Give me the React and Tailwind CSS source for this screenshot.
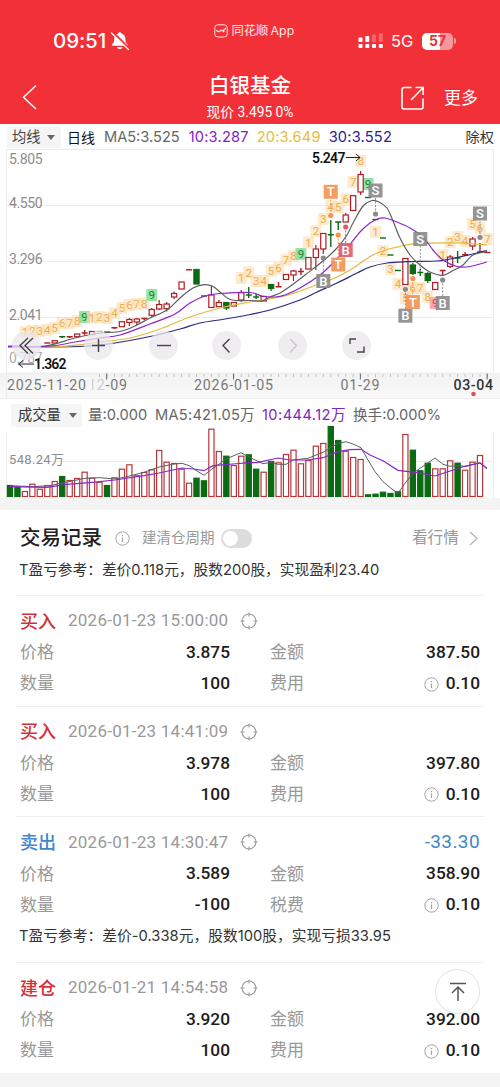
import React from "react";

const FONT = "font-['Inter','Noto_Sans_CJK_SC',sans-serif]";
const NUM = "font-['Roboto','Noto_Sans_CJK_SC',sans-serif]";

const RED = "#b01c24";
const GREEN = "#0b6b12";

const xAt = (i) => 10 + i * 7.46;

// [index, top, bottom, wickTop, wickBottom, color]
const candles = [
  [6, 340.7, 343, 340.7, 343, "r"],
  [9, 334, 336.7, 334, 336.7, "r"],
  [11, 331.5, 334.5, 331.5, 334.5, "r"],
  [15, 321.7, 326.7, 321.7, 326.7, "r"],
  [16, 319.5, 322.5, 318, 326, "r"],
  [17, 319, 322, 318, 325, "r"],
  [19, 309.5, 315.3, 308, 317, "r"],
  [20, 304.5, 309, 300, 310, "r"],
  [21, 304, 308.7, 302, 311.5, "r"],
  [22, 293.5, 297, 291.5, 299, "r"],
  [23, 282, 289, 282, 289, "r"],
  [25, 269.5, 284, 269.5, 284, "g"],
  [27, 295, 307.5, 285.5, 307.5, "r"],
  [28, 302.5, 306.7, 300, 306.7, "r"],
  [29, 302.5, 308, 302, 310, "g"],
  [30, 302.5, 306, 302.5, 306, "r"],
  [31, 292.7, 300, 290, 302, "r"],
  [34, 296.5, 301, 296.5, 301, "r"],
  [35, 284.5, 288.5, 284, 291, "g"],
  [37, 274.5, 279.5, 274.5, 279.5, "r"],
  [38, 271, 275, 270, 281, "r"],
  [40, 257.5, 269, 257.5, 269, "r"],
  [41, 249, 257.5, 245, 270, "r"],
  [42, 233.5, 249, 233.5, 254, "r"],
  [45, 215, 222, 213, 222, "r"],
  [46, 195.7, 210.5, 195.7, 210.5, "r"],
  [47, 174.5, 192, 171, 195, "r"],
  [53, 258.5, 284.5, 258.5, 284.5, "r"],
  [54, 265, 273.5, 263, 275, "g"],
  [56, 273.5, 280.5, 272, 283, "g"],
  [57, 282.5, 289.5, 282.5, 289.5, "r"],
  [59, 257, 266.5, 255, 268, "r"],
  [62, 239, 246, 237, 250, "r"],
];

// [index, y, wickTop, wickBottom, color]
const dashes = [
  [5, 343, 343, 343, RED],
  [7, 336.7, 336, 338, GREEN],
  [8, 336.7, 336, 338, RED],
  [10, 333, 330, 335.5, RED],
  [12, 331.5, 331.5, 331.5, "#888"],
  [13, 332, 332, 332, "#555"],
  [14, 327.7, 327, 329, RED],
  [18, 318.5, 318, 320, RED],
  [24, 269.8, 269.8, 269.8, RED],
  [26, 296, 296, 296, "#3c4a44"],
  [32, 295, 287, 298, GREEN],
  [33, 297, 294, 299, GREEN],
  [36, 286.8, 282, 287.5, RED],
  [39, 271.5, 268, 275, RED],
  [43, 234.8, 220, 247, GREEN],
  [44, 222, 222, 230, GREEN],
  [48, 197.5, 197.5, 197.5, GREEN],
  [49, 219.5, 219.5, 219.5, "#33405a"],
  [50, 238, 238, 238, GREEN],
  [51, 255, 255, 255, GREEN],
  [52, 270.5, 270.5, 270.5, GREEN],
  [55, 272.5, 269, 276, GREEN],
  [58, 270.5, 270.5, 275, RED],
  [60, 258, 251, 263, GREEN],
  [61, 254.7, 252, 256, RED],
  [63, 252, 243, 252, RED],
  [64, 252.5, 252.5, 252.5, RED],
];

// sequence counters: [start index, list of y]
const sequences = [
  [2, [332, 331, 331, 330, 328, 323, 323, 321, 317]],
  [11, [318, 317, 318, 313, 308, 305, 304, 303.5, 295]],
  [31, [278, 272.5, 281, 281, 270.5, 268, 260, 256, 254]],
  [40, [242.5, 231, 219, 206.5, 207, 199, 182, 161, 184]],
  [49, [232, 251, 269, 284, 298, 288, 288, 297, 303]],
  [58, [255, 242, 237, 241, 224, 228, 239]],
];

// trade marks: letter, index, label y, dot y, color
const marks = [
  ["T", 43, 191.8, 215.5, "#f4924e"],
  ["T", 44, 264.5, 235, "#f4924e"],
  ["B", 45, 250, 227, "#e05a66"],
  ["B", 42, 281, 258, "#8a8a8a"],
  ["S", 49, 190.5, 214, "#8a8a8a"],
  ["S", 55, 239, 272, "#8a8a8a"],
  ["B", 53, 315.7, 289.3, "#8a8a8a"],
  ["T", 54, 302, 278.5, "#f4924e"],
  ["B", 58, 303, 280, "#8a8a8a"],
  ["S", 63, 213.5, 237.3, "#8a8a8a"],
];

const ma5 = [[8, 346], [45, 346], [75, 338], [100, 333], [120, 331.5], [135, 326], [150, 318], [167, 310], [180, 298], [193, 288], [205, 284.7], [213, 286.5], [220, 292], [228, 298.5], [235, 300.5], [250, 300.5], [262, 301], [270, 297], [280, 293], [292, 285], [305, 275], [323, 261], [337, 248], [347, 235], [353, 223], [363, 206], [372, 200.5], [379, 202], [387, 208], [393, 221], [400, 238], [410, 255], [420, 265], [430, 272], [443, 275.3], [453, 270.5], [463, 265], [473, 255], [487, 251.5]];
const ma10 = [[8, 346.5], [50, 346], [75, 342], [100, 338], [120, 335], [150, 324], [175, 314], [190, 303], [205, 296], [220, 293.5], [250, 292.5], [262, 296], [275, 297], [285, 295], [300, 288], [320, 275], [333, 263], [347, 248], [360, 232], [370, 223], [378, 218.7], [385, 218], [397, 222], [410, 228], [423, 237], [433, 250], [443, 260], [457, 266.5], [470, 266.5], [487, 262]];
const ma20 = [[8, 347], [60, 346.5], [100, 342], [130, 338], [160, 329], [190, 317], [220, 308], [250, 302], [280, 297], [300, 291], [320, 283.5], [335, 278], [350, 270], [367, 258.5], [377, 253], [393, 248], [410, 244.3], [427, 243.2], [460, 243], [487, 245]];
const ma30 = [[8, 347], [80, 346.5], [115, 343], [150, 336.5], [180, 329], [200, 323], [225, 319], [250, 314.5], [270, 310], [300, 300], [317, 292], [337, 283], [357, 273], [370, 267], [387, 263], [407, 261.7], [437, 261], [450, 259], [477, 253], [487, 250.5]];

const volumes = "11g 9g 5r 12.3r 7.3r 11r 15r 20g 16r 18r 24.3r 18.3r 14.3r 11g 18.7r 27.3r 31.7r 20.7r 24r 26.7r 46r 34.3r 33r 27.3r 13.3r 18.3g 15.7g 67.3r 45r 40.3g 31r 40.3r 41.7g 27.3g 24.3r 35g 33.7r 42r 46.3r 32.7r 36r 50.3r 53r 70g 56g 45.3r 39r 37r 1.7g 2.3g 4.3g 3g 4.7g 62r 46.3g 25.7g 33.3g 27.7r 27.7r 35.7r 33.3g 26.3r 34.3r 41r"
  .split(" ")
  .map((s) => ({ h: parseFloat(s), up: s.endsWith("r") }));

const volMa5 = [[10, 485.7], [33, 486.7], [50, 485.7], [67, 482], [85, 478.3], [100, 477.7], [115, 479], [127, 476.7], [144, 472.3], [159, 467], [174, 464], [182, 463.3], [190, 466], [197, 471], [204, 475.3], [212, 469], [219, 464.3], [226, 459], [241, 452.7], [253, 459], [263, 463.7], [271, 462.3], [278, 464.3], [286, 464.3], [293, 460], [308, 458.3], [323, 452.3], [338, 443.3], [346, 441.7], [353, 444], [361, 447.7], [367, 458.3], [375, 471.7], [383, 481.7], [391, 488.3], [398, 493.3], [405, 483.3], [413, 473.3], [420, 468.3], [435, 458], [443, 464.3], [450, 466.3], [458, 465.7], [465, 466.3], [473, 464.3], [480, 462.7], [487, 469]];
const volMa10 = [[10, 486.7], [47, 487.3], [67, 484.3], [92, 482.3], [115, 480], [144, 475.7], [159, 473], [182, 468], [193, 469], [204, 470.7], [213, 465.7], [233, 464], [249, 462.7], [257, 462.7], [278, 458], [290, 460], [308, 460], [323, 457.7], [338, 451.7], [350, 449.7], [361, 449.3], [370, 455], [383, 460.7], [398, 470.3], [417, 472.7], [435, 476], [450, 471], [465, 466.3], [480, 463], [487, 468.3]];

// Catmull-Rom to cubic bezier
const smooth = (p) => {
  let d = `M${p[0][0]} ${p[0][1]}`;
  for (let i = 0; i < p.length - 1; i++) {
    const a = p[i - 1] || p[i];
    const b = p[i];
    const c = p[i + 1];
    const e = p[i + 2] || c;
    d += ` C${b[0] + (c[0] - a[0]) / 6} ${b[1] + (c[1] - a[1]) / 6} ${c[0] - (e[0] - b[0]) / 6} ${c[1] - (e[1] - b[1]) / 6} ${c[0]} ${c[1]}`;
  }
  return d;
};

const line = (p) => "M" + p.map((q) => q.join(" ")).join(" L");

const StatusBar = () => (
  <div className="flex h-[62px] items-start justify-between pr-[44px] pl-[53px] text-white">
    <div className="flex w-[152px] items-center pt-[29px]">
      <span className="text-[20.5px] leading-6 font-medium tracking-[-0.1px]">09:51</span>
      <svg className="ml-[4px]" width="20" height="20" viewBox="0 0 20 20">
        <path d="M9.800 1.200c1 0 1.600.6 1.600 1.400 2.600.8 4 2.800 4 5.400 0 3.200.8 4.200 2.100 5.300.6.600.3 1.500-.6 1.500H2.700c-.9 0-1.200-.9-.6-1.500 1.300-1.100 2.100-2.100 2.100-5.300 0-2.600 1.400-4.600 4-5.400 0-.8.600-1.400 1.600-1.400z" fill="#fff" />
        <path d="M7 16h5.600c-.3 1.400-1.400 2.200-2.800 2.200S7.300 17.400 7 16z" fill="#fff" />
        <path d="M3 1.300l15.800 15.600" stroke="#f23037" strokeWidth="2" />
        <path d="M1.500 2l17 16.500" stroke="#fff" strokeWidth="1.300" strokeLinecap="round" />
      </svg>
    </div>
    <div className="flex items-center gap-[3px] pt-[22px] text-[12.3px] leading-[18px] text-white/90">
      <svg width="14" height="14" viewBox="0 0 14 14" fill="none" stroke="#fff" strokeOpacity=".85">
        <rect x="0.8" y="0.8" width="12.4" height="12.2" rx="3" />
        <path d="M2 6.500l3 1.200 2-1.400 2 .4 3-2.800M9 8l1.500-1" strokeWidth="1.3" />
      </svg>
      <span>同花顺<span className="ml-[2px] tracking-[0.2px]">App</span></span>
    </div>
    <div className="flex w-[152px] items-center justify-end pt-[30px]">
      <svg width="26" height="16" viewBox="0 0 26 16" fill="#fff">
        {[0.5, 7.3, 14, 20.8].map((x) => (
          <rect key={x} x={x} y="11" width="4" height="4" rx="0.8" />
        ))}
        <rect x="0.5" y="4.5" width="4" height="4.5" rx="0.8" />
        <rect x="7.3" y="3" width="4" height="6" rx="0.8" />
        <rect x="14" y="1.500" width="4" height="7.500" rx="0.8" opacity=".25" />
        <rect x="20.8" y="0" width="4" height="9" rx="0.8" opacity=".25" />
      </svg>
      <span className="ml-[7px] text-[16.5px] leading-[22px] tracking-[-0.2px]">5G</span>
      <div className="ml-[9px] flex h-[17px] w-[31px] items-center justify-center rounded-[5px] bg-linear-to-r from-white from-57% to-white/50 to-57% text-[14px] leading-none font-bold text-[#e2343b]">
        57
      </div>
      <div className="ml-[1px] h-[6px] w-[2px] rounded-r bg-white/50" />
    </div>
  </div>
);

const NavBar = () => (
  <div className="flex h-[62px] items-start justify-between pr-[22px] pl-[22px] text-white">
    <div className="w-[100px] pt-[22px]">
      <svg width="17" height="27" viewBox="0 0 17 27" fill="none" stroke="#fff" strokeWidth="1.5">
        <path d="M14 1.500L1.500 13.200l12.500 11.800" />
      </svg>
    </div>
    <div className="flex flex-col items-center pt-[9px]">
      <h1 className="text-[20.5px] leading-[30px] font-medium">白银基金</h1>
      <p className={`${NUM} mt-[1px] text-[13.8px] leading-[20px] whitespace-nowrap`}>现价 3.495 0%</p>
    </div>
    <div className="flex w-[100px] items-center justify-end pt-[23px]">
      <svg className="mr-[19px]" width="25" height="25" viewBox="0 0 25 25" fill="none" stroke="#fff" strokeWidth="1.6">
        <path d="M11.500 1.500H4A2 2 0 0 0 2 3.500v17.500a2 2 0 0 0 2 2H21a2 2 0 0 0 2-2V12.500" />
        <path d="M11 14L23 1.800M15.500 1.500h7.700v7.500" />
      </svg>
      <span className="shrink-0 text-[17px] leading-[26px]">更多</span>
    </div>
  </div>
);

const Caret = () => (
  <svg width="8" height="5" viewBox="0 0 8 5" fill="#666">
    <path d="M0 0h8L4 5z" />
  </svg>
);

const KLegend = () => (
  <div className="flex h-[25px] items-center pt-[2px] pr-[6px] pl-[7px] text-[14.6px] leading-none whitespace-nowrap">
    <div className="flex h-[21px] w-[54px] items-center justify-between bg-[#f5f5f5] pr-[6px] pl-[5px] text-[14.3px] text-[#444]">
      均线 <Caret />
    </div>
    <span className="ml-[6px] text-[14px] text-[#111]">日线</span>
    <span className="ml-[9px] text-[#666]">MA5:3.525</span>
    <span className="ml-[9px] tracking-[0.2px] text-[#8222c4]">10:3.287</span>
    <span className="ml-[8px] tracking-[0.2px] text-[#e6bd3c]">20:3.649</span>
    <span className="ml-[8px] tracking-[0.2px] text-[#2a2193]">30:3.552</span>
    <span className="ml-auto text-[14.2px] text-[#333]">除权</span>
  </div>
);

const KChart = () => (
  <svg className="block" width="500" height="249" viewBox="0 149 500 249">
    <defs>
      <linearGradient id="axis" x1="0" y1="0" x2="0" y2="1">
        <stop offset="0" stopColor="#f2f2f2" />
        <stop offset="1" stopColor="#fafafa" />
      </linearGradient>
    </defs>
    <rect x="0" y="373" width="500" height="25" fill="url(#axis)" />
    <g stroke="#ececec" strokeWidth="1">
      <path d="M6 149.500H493.500V373M6.500 149V398M6 205.500H493M6 261.500H493M6 317.500H493M6 373H493" fill="none" />
    </g>

    <g className={NUM} fontSize="14" fill="#8c8c8c">
      <text x="9" y="164" textLength="33.5">5.805</text>
      <text x="9" y="208" textLength="33.5">4.550</text>
      <text x="9" y="263.5" textLength="33.5">3.296</text>
      <text x="9" y="320" textLength="33.5">2.041</text>
      <text x="9" y="362.5" textLength="33.5" fill="#aaa">0.787</text>
    </g>

    {sequences.map(([start, ys]) =>
      ys.map((y, n) => {
        const x = xAt(start + n);
        const nine = n === 8;
        const pink = nine && start === 49;
        const bg = pink ? "#ffa0a6" : nine ? "#8be09a" : "#fddcab";
        const fg = pink ? "#c64a50" : nine ? "#15803d" : "#e9ad55";
        return (
          <g key={`${start}-${n}`}>
            <rect x={x - 5.5} y={y - 6} width="11" height="12" rx="1" fill={bg} fillOpacity={nine ? 0.9 : 0.6} />
            <text x={x} y={y + 4.2} className={NUM} fontSize="11.5" textAnchor="middle" fill={fg}>{n + 1}</text>
          </g>
        );
      })
    )}

    {candles.map(([i, t, b, wt, wb, c]) => (
      <g key={i} stroke={c === "r" ? RED : GREEN} strokeWidth="1.2">
        <path d={`M${xAt(i)} ${wt}V${wb}`} />
        <rect x={xAt(i) - 2.6} y={t} width="5.2" height={b - t} fill={c === "r" ? "#fff" : GREEN} />
      </g>
    ))}
    {dashes.map(([i, y, wt, wb, c]) => (
      <path key={i} d={`M${xAt(i) - 3} ${y}h6M${xAt(i)} ${wt}V${wb}`} stroke={c} strokeWidth="1.4" />
    ))}

    <g fill="none" strokeWidth="1.2">
      <path d={smooth(ma30)} stroke="#2a2a7e" />
      <path d={smooth(ma20)} stroke="#e3b93c" />
      <path d={smooth(ma5)} stroke="#5c5f60" />
      <path d={smooth(ma10)} stroke="#8a27c9" />
    </g>

    {marks.map(([t, i, y, dot, c]) => (
      <g key={`${t}${i}`}>
        <path d={`M${xAt(i)} ${dot}V${y}`} stroke={c} strokeDasharray="2 1.5" />
        <circle cx={xAt(i)} cy={dot} r={i === 55 ? 0 : 2.6} fill={c} />
        <rect x={xAt(i) - 7} y={y - 7} width="14" height="14" fill={c} fillOpacity=".9" />
        <text x={xAt(i)} y={y + 4.6} className={NUM} fontSize="13" fontWeight="500" textAnchor="middle" fill="#fff">{t}</text>
      </g>
    ))}

    <g className={NUM} fontSize="14" fontWeight="600" fill="#111">
      <text x="312" y="162.5" textLength="33.5">5.247</text>
      <text x="34" y="369" textLength="32.5">1.362</text>
    </g>
    <g fill="none" stroke="#222" strokeWidth="1">
      <path d="M346 157.500h14M356 154l4 3.500-4 3.500" />
      <path d="M34 364H18.500M23 360.500l-4.500 3.500 4.500 3.500" />
    </g>

    <g stroke="#c4c4c4">
      {Array.from({ length: 53 }, (_, n) => n + 12).map((i) => (
        <path key={i} d={`M${xAt(i)} 374v3`} />
      ))}
      {[13, 30, 47, 64].map((i) => (
        <path key={i} d={`M${xAt(i) - 0.3} 373.500v6`} stroke="#666" />
      ))}
    </g>
    <g className={NUM} fontSize="14.2" fill="#777">
      <text x="88" y="390" textLength="39">
        <tspan fill="#ccc">12</tspan>-09
      </text>
      <rect x="84" y="377" width="8" height="16" fill="#f6f6f6" />
      <text x="7" y="390" textLength="79">2025-11-20</text>
      <text x="194" y="390" textLength="79">2026-01-05</text>
      <text x="340.5" y="390" textLength="39">01-29</text>
      <text x="453.5" y="390" textLength="39.5" fill="#333" fontWeight="500">03-04</text>
    </g>
    <circle cx="473.5" cy="394" r="2.3" fill="#e0505c" />
  </svg>
);

const tools = [
  { left: "left-[12px]", icon: "M16 7L8 14.500l8 8M21 7l-8 7.500 8 8" },
  { left: "left-[84px]", icon: "M8 14.500h13M14.500 8v13" },
  { left: "left-[149px]", icon: "M8 14.500h14" },
  { left: "left-[212px]", icon: "M17.500 8l-6.500 6.500 6.500 7" },
  { left: "left-[278px]", icon: "M12 8l6.500 6.500L12 21.500", muted: true },
  { left: "left-[342px]", icon: "M8 13V8h6M22 15.500v5.500h-7" },
];

const ChartTools = () => (
  <>
    {tools.map((t) => (
      <button key={t.left} className={`absolute top-[183px] size-[29px] rounded-full bg-[#e9e7ea]/75 ${t.left}`}>
        <svg width="29" height="29" viewBox="0 0 29 29" fill="none" stroke={t.muted ? "#c8c8c8" : "#444"} strokeWidth="1.4">
          <path d={t.icon} />
        </svg>
      </button>
    ))}
  </>
);

const VolumeLegend = () => (
  <div className="flex h-[32px] items-center pl-[11px] text-[14.6px] leading-none whitespace-nowrap text-[#666]">
    <div className="flex h-[23px] w-[71px] items-center justify-between rounded-xs bg-[#f5f5f5] pr-[5px] pl-[7px] text-[14.3px] text-[#333]">
      成交量 <Caret />
    </div>
    <span className="ml-[6px]">量:0.000</span>
    <span className="ml-[8px] tracking-[0.25px]">MA5:421.05万</span>
    <span className="ml-[7px] tracking-[0.45px] text-[#8222c4]">10:444.12万</span>
    <span className="ml-[7px]">换手:0.000%</span>
  </div>
);

const VolumeChart = () => (
  <svg className="block overflow-visible" width="500" height="67" viewBox="0 431 500 67">
    <path d="M6 461.500H493" stroke="#ececec" />
    <path d="M6.500 431V498M493.500 431V498" stroke="#f0f0f0" />
    {volumes.map((v, i) => (
      <rect
        key={i}
        x={xAt(i) - 2.6}
        y={496.5 - v.h}
        width="5.2"
        height={v.h}
        fill={v.up ? "#fff" : GREEN}
        stroke={v.up ? "#b5373c" : GREEN}
        strokeWidth="1.2"
      />
    ))}
    <path d={line(volMa5)} fill="none" stroke="#5c5f60" strokeWidth="1" />
    <path d={line(volMa10)} fill="none" stroke="#8a27c9" strokeWidth="1.2" />
    <text x="9" y="463.5" className={NUM} fontSize="13" fill="#8c8c8c" textLength="55">548.24万</text>
  </svg>
);

const InfoIcon = () => (
  <svg width="15" height="15" viewBox="0 0 15 15" fill="none" stroke="#a3a3a3" strokeWidth="1">
    <circle cx="7.5" cy="7.5" r="6.7" />
    <path d="M7.500 6.500v4.500M7.500 4v1.200" strokeWidth="1.2" />
  </svg>
);

const TargetIcon = () => (
  <svg width="18" height="18" viewBox="0 0 18 18" fill="none" stroke="#999" strokeWidth="1.1">
    <circle cx="9" cy="9" r="7" />
    <path d="M9 .5v4M9 13.500v4M.5 9h4M13.500 9h4" />
  </svg>
);

const records = [
  { type: "买入", time: "2026-01-23 15:00:00", price: "3.875", amount: "387.50", qty: "100", feeLabel: "费用", fee: "0.10" },
  { type: "买入", time: "2026-01-23 14:41:09", price: "3.978", amount: "397.80", qty: "100", feeLabel: "费用", fee: "0.10" },
  { type: "卖出", time: "2026-01-23 14:30:47", price: "3.589", amount: "358.90", qty: "-100", feeLabel: "税费", fee: "0.10", profit: "-33.30", note: "T盈亏参考：差价-0.338元，股数100股，实现亏损33.95" },
  { type: "建仓", time: "2026-01-21 14:54:58", price: "3.920", amount: "392.00", qty: "100", feeLabel: "费用", fee: "0.10" },
];

const Field = ({ label, value, info }) => (
  <div className="flex items-center justify-between pt-[1px]">
    <span className="text-[17px] text-[#999]">{label}</span>
    <span className="flex items-center gap-[7px]">
      {info && <InfoIcon />}
      <span className={`${NUM} text-[17.3px] font-medium text-[#1c1c1c]`}>{value}</span>
    </span>
  </div>
);

const Record = ({ r }) => {
  const sell = r.type === "卖出";
  return (
    <div className="mx-[16px] border-t border-[#efefef] pt-[9px] pr-[4px] pb-[6.7px] pl-[4px]">
      <div className="flex h-[32px] items-center">
        <span className={`text-[18px] font-medium ${sell ? "text-[#3f86cf]" : "text-[#d5303a]"}`}>{r.type}</span>
        <span className={`${NUM} ml-[12px] text-[17px] tracking-[0.25px] text-[#999]`}>{r.time}</span>
        <span className="ml-[12px]"><TargetIcon /></span>
        {r.profit && <span className={`${NUM} ml-auto text-[19px] tracking-[0.4px] text-[#3f86cf]`}>{r.profit}</span>}
      </div>
      <div className="grid grid-cols-[210px_210px] justify-between">
        <div className="grid auto-rows-[31px]">
          <Field label="价格" value={r.price} />
          <Field label="数量" value={r.qty} />
        </div>
        <div className="grid auto-rows-[31px]">
          <Field label="金额" value={r.amount} />
          <Field label={r.feeLabel} value={r.fee} info />
        </div>
      </div>
      {r.note && <p className="-ml-[1px] h-[35px] text-[14.7px] leading-[33px] tracking-[0.05px] whitespace-nowrap text-[#333]">{r.note}</p>}
    </div>
  );
};

const App = () => (
  <div className={`${FONT} relative h-[1087px] w-[500px] overflow-hidden bg-[#f4f4f4]`}>
    <header className="bg-[#f23037]">
      <StatusBar />
      <NavBar />
    </header>

    <section className="bg-white">
      <KLegend />
      <div className="relative -mt-[1px] pt-[1px]">
        <KChart />
        <ChartTools />
      </div>
      <div className="border-t border-[#eee]">
        <VolumeLegend />
        <VolumeChart />
      </div>
    </section>

    <section className="mt-[12px] bg-white pt-[11px]">
      <div className="flex h-[34px] items-center pr-[22px] pl-[20px]">
        <h2 className="text-[20.5px] font-medium text-[#222]">交易记录</h2>
        <span className="ml-[13px]"><InfoIcon /></span>
        <span className="ml-[12px] text-[14.5px] text-[#999]">建清仓周期</span>
        <div className="ml-[6px] flex h-[19px] w-[31px] items-center rounded-full bg-[#dcdcdc] p-[2px]">
          <div className="size-[15px] rounded-full bg-white" />
        </div>
        <span className="ml-auto text-[15.7px] text-[#999]">看行情</span>
        <svg className="ml-[10px]" width="9" height="15" viewBox="0 0 9 15" fill="none" stroke="#b5b5b5" strokeWidth="1.3">
          <path d="M1 1l7 6.500L1 14" />
        </svg>
      </div>
      <p className="mb-[10px] h-[30px] pl-[19px] text-[14.7px] leading-[30px] whitespace-nowrap text-[#333]">
        T盈亏参考：差价0.118元，股数200股，实现盈利23.40
      </p>
      {records.map((r) => (
        <Record key={r.time} r={r} />
      ))}
    </section>

    <button className="absolute top-[969px] left-[435px] flex size-[45px] items-center justify-center rounded-full border border-[#e2e2e2] bg-white/90">
      <svg width="18" height="20" viewBox="0 0 18 20" fill="none" stroke="#555" strokeWidth="1.5">
        <path d="M1 1.500h16M9 19V5.500M3 11l6-6 6 6" />
      </svg>
    </button>
  </div>
);

export default App;
